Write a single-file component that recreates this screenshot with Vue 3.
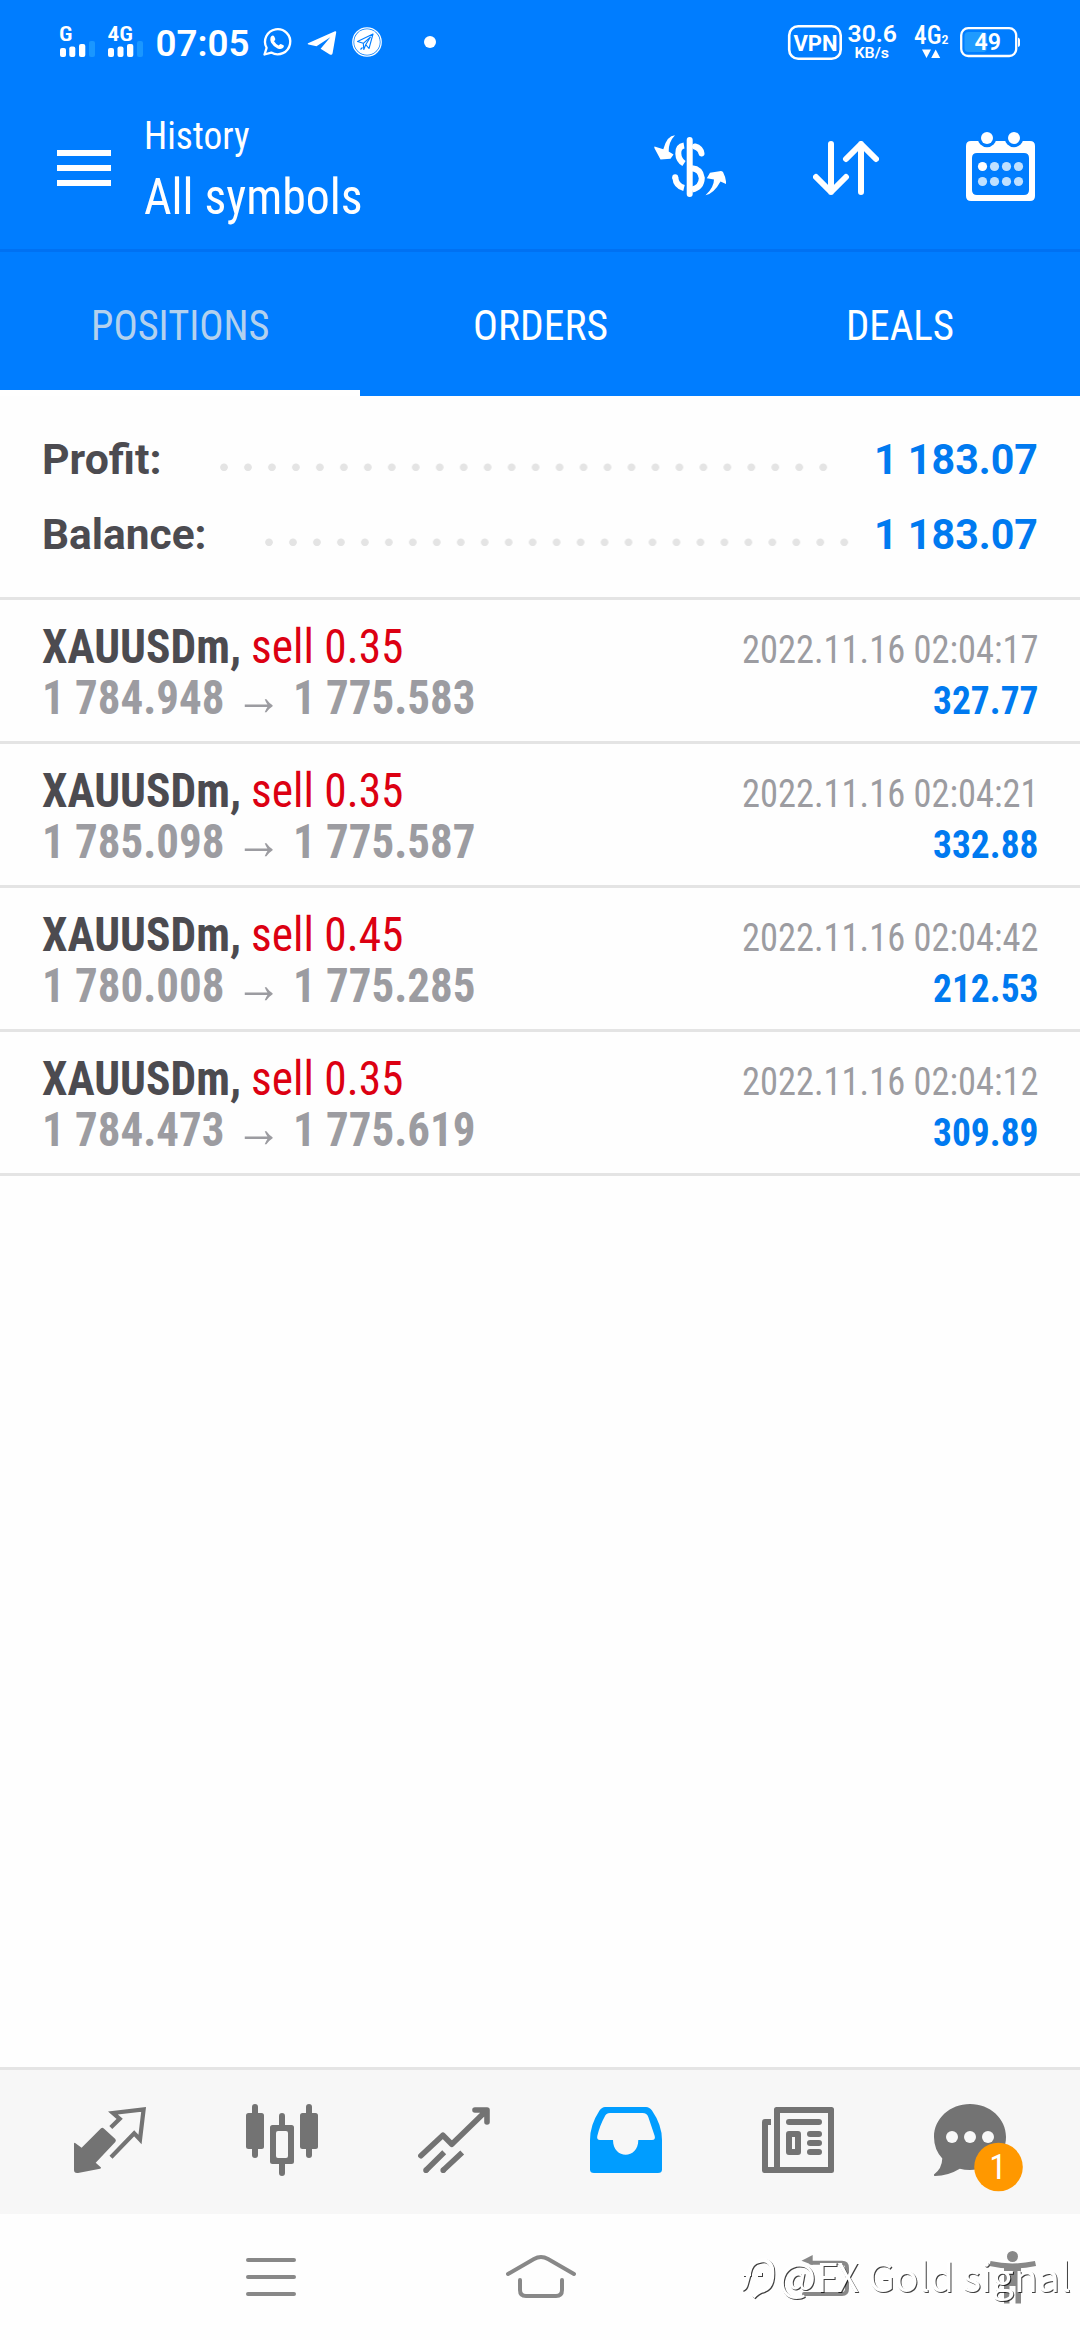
<script setup>
import { h } from 'vue'

// A run of text set to an exact advance width on a given baseline.
const Fit = (p) =>
  h('svg', { class: 'fit', width: p.w, height: p.h }, [
    h('text', { x: 0, y: p.base, textLength: p.w, lengthAdjust: 'spacingAndGlyphs', fill: 'currentColor' }, p.text),
  ])
Fit.props = ['w', 'h', 'base', 'text']

const tabs = [
  { label: 'POSITIONS', w: 178.5, active: true },
  { label: 'ORDERS', w: 135 },
  { label: 'DEALS', w: 108 },
]

const totals = [
  { label: 'Profit:', w: 119.5, dots: 26, value: '1 183.07' },
  { label: 'Balance:', w: 164.5, dots: 25, value: '1 183.07' },
]

const deals = [
  { volume: '0.35', open: '1 784.948', close: '1 775.583', time: '2022.11.16 02:04:17', profit: '327.77' },
  { volume: '0.35', open: '1 785.098', close: '1 775.587', time: '2022.11.16 02:04:21', profit: '332.88' },
  { volume: '0.45', open: '1 780.008', close: '1 775.285', time: '2022.11.16 02:04:42', profit: '212.53' },
  { volume: '0.35', open: '1 784.473', close: '1 775.619', time: '2022.11.16 02:04:12', profit: '309.89' },
]
</script>

<template>
  <div class="screen">
    <header class="top">
      <div class="status">
        <svg width="460" height="84" fill="#fff">
          <text x="59" y="41" font-size="20" font-weight="600" textLength="13.5" lengthAdjust="spacingAndGlyphs">G</text>
          <rect x="60" y="48" width="6" height="9" rx="2" />
          <rect x="69.3" y="46.5" width="6" height="10.5" rx="2" />
          <rect x="79" y="44" width="6.3" height="13" rx="2" />
          <rect x="89" y="41" width="6" height="16" rx="2" fill="#1a97ff" />
          <text x="107.5" y="41" font-size="20" font-weight="600" textLength="25.5" lengthAdjust="spacingAndGlyphs">4G</text>
          <rect x="108" y="48" width="6" height="9" rx="2" />
          <rect x="117.5" y="46.5" width="6" height="10.5" rx="2" />
          <rect x="127" y="44" width="6.3" height="13" rx="2" />
          <rect x="137" y="41" width="6" height="16" rx="2" fill="#1a97ff" />
          <text x="155.5" y="56" font-size="36" font-weight="600" class="wide" textLength="94" lengthAdjust="spacingAndGlyphs">07:05</text>
          <g transform="translate(263 28)">
            <path d="M1.5 26.5 L3.6 19.8 A12.6 12.6 0 1 1 8.3 24.6 Z" fill="none" stroke="#fff" stroke-width="2.3" stroke-linejoin="round" />
            <path d="M7.5 9.5 Q8.5 7.3 10 7.5 Q11 7.6 11.5 9 L12.3 11 Q12.5 12 11 13.3 Q12.8 16.3 15.6 17.4 Q17 15.7 17.8 15.9 L20.5 17.3 Q21.3 17.9 20.6 19.3 Q18.6 22 14.6 20.4 Q10.4 18.5 8 14.4 Q6.9 11.9 7.5 9.5Z" />
          </g>
          <path d="M308 43.2 L335 31.2 Q336.5 31 336.2 32.6 L332.6 53.2 Q332 55.6 329.8 54.4 L320.6 48.7 L330.3 37.2 L316.5 46.3 L308.5 44.6 Q307 44 308 43.2Z" />
          <circle cx="367" cy="42" r="12.8" />
          <circle cx="367" cy="42" r="14.2" fill="none" stroke="#fff" stroke-width="1.3" />
          <path d="M357.5 41.5 L373 34 L369 48.5 L365.7 44.7 L363.8 49.5 L363.3 43.3 Z M363.3 43.3 L370.5 37 L365.7 44.7 M360.5 49.5 L362.5 47.5" fill="none" stroke="#007dff" stroke-width="1.1" stroke-linejoin="round" />
          <circle cx="430" cy="42" r="6" />
        </svg>
        <svg width="300" height="84" viewBox="780 0 300 84" fill="#fff">
          <rect x="789.2" y="26.3" width="51.5" height="32.4" rx="9" fill="none" stroke="#fff" stroke-width="2.6" />
          <text x="793.5" y="51" font-size="22.5" font-weight="700" class="wide" textLength="44" lengthAdjust="spacingAndGlyphs">VPN</text>
          <text x="847.5" y="42" font-size="24" font-weight="600" class="wide" textLength="49.5" lengthAdjust="spacingAndGlyphs">30.6</text>
          <text x="854.5" y="58" font-size="15" font-weight="600" class="wide" textLength="34.5" lengthAdjust="spacingAndGlyphs">KB/s</text>
          <text x="914" y="43.5" font-size="25" font-weight="500" textLength="27.5" lengthAdjust="spacingAndGlyphs">4G</text>
          <text x="941.5" y="43.5" font-size="13" font-weight="600" textLength="7" lengthAdjust="spacingAndGlyphs">2</text>
          <path d="M922 49.5 H931 L926.5 58Z M931.2 58 H940.2 L935.7 49.5Z" />
          <rect x="964.5" y="32" width="22.5" height="20" rx="4" fill="#1f9bff" />
          <rect x="961.2" y="28.2" width="55" height="27.8" rx="7" fill="none" stroke="#fff" stroke-width="2.3" />
          <path d="M1018 37.5 Q1020 38 1020 40 V45 Q1020 46.5 1018 47Z" />
          <text x="974.5" y="50" font-size="23" font-weight="600" class="wide" textLength="26.5" lengthAdjust="spacingAndGlyphs">49</text>
        </svg>
      </div>

      <div class="bar">
        <svg class="burger" width="54" height="36" fill="#fff">
          <rect width="54" height="6" /><rect y="15" width="54" height="6" /><rect y="30" width="54" height="6" />
        </svg>
        <div class="titles">
          <Fit class="sub" :w="105.5" :h="50" :base="40" text="History" />
          <Fit class="title" :w="218.5" :h="65" :base="55" text="All symbols" />
        </div>
        <svg class="act" width="72" height="72" viewBox="0 0 72 72">
          <g fill="none" stroke="#fff" stroke-width="6" stroke-linecap="round">
            <path d="M35.7 9 V63" />
            <path d="M30 14.5 Q24 15.5 24.3 22.5 Q24.5 29 30 32.5" stroke-linecap="butt" />
            <path d="M41 15.5 Q46.5 17 47.5 22.5" />
            <path d="M38 37.3 Q46.5 38 47.8 47 Q47.5 56.5 38 58.6" stroke-linecap="butt" />
            <path d="M21.3 46.5 Q22 55 30 57" stroke-linecap="butt" />
          </g>
          <circle cx="21.2" cy="46.3" r="3" fill="#fff" />
          <path fill="#fff" d="M21 4.3 Q13 4.5 9.3 18.3 L.5 15.5 Q0 15.5 .5 17.2 L6.5 28.6 L16.5 27.7 L19.5 23.6 L14.7 20.5 Q14.5 11 21 4.3Z" />
          <path fill="#fff" d="M51.5 64.3 Q60 62.5 66.5 50.5 L72 53 Q72.5 48 69 41 Q67.5 39.6 65.5 40.3 L56 41.7 L52.8 47.3 L60 48.5 Q60 56.5 51.5 64.3Z" />
        </svg>
        <svg class="act sort" width="66" height="54" fill="none" stroke="#fff" stroke-width="6" stroke-linecap="round" stroke-linejoin="round">
          <path d="M18 3 V51 M3 36 L18 51 L33 36 M48 51 V3 M33 18 L48 3 L63 18" />
        </svg>
        <svg class="act" width="69" height="69" fill="#fff">
          <path fill-rule="evenodd" d="M5 9 H64 Q69 9 69 14 V64 Q69 69 64 69 H5 Q0 69 0 64 V14 Q0 9 5 9Z M11 21 Q6 21 6 26 V58 Q6 63 11 63 H58 Q63 63 63 58 V26 Q63 21 58 21Z" />
          <circle cx="21" cy="6" r="9.2" fill="#007dff" /><circle cx="48" cy="6" r="9.2" fill="#007dff" />
          <circle cx="21" cy="6" r="6" /><circle cx="48" cy="6" r="6" />
          <circle cx="16.5" cy="34.5" r="4.6" />
          <g fill="#bfe0ff">
            <circle v-for="n in 3" :key="n" :cx="16.5 + n * 12" cy="34.5" r="4.6" />
            <circle v-for="n in 4" :key="'b' + n" :cx="4.5 + n * 12" cy="49.5" r="4.6" />
          </g>
        </svg>
      </div>

      <nav class="tabs">
        <div v-for="t in tabs" :key="t.label" class="tab" :class="{ active: t.active }">
          <Fit :w="t.w" :h="138" :base="88" :text="t.label" />
        </div>
      </nav>
    </header>

    <section class="totals">
      <div v-for="t in totals" :key="t.label" class="total">
        <Fit class="label" :w="t.w" :h="75" :base="50" :text="t.label" />
        <div class="dots" :style="{ width: t.dots * 23.98 + 'px' }"></div>
        <Fit class="amount" :w="164" :h="75" :base="50" :text="t.value" />
      </div>
    </section>

    <main class="list">
      <article v-for="d in deals" :key="d.time" class="deal">
        <div class="left">
          <div class="line">
            <Fit class="symbol" :w="199" :h="78" :base="63" text="XAUUSDm," />
            <Fit class="side" :w="152.5" :h="78" :base="63" :text="'sell ' + d.volume" />
          </div>
          <div class="line prices">
            <Fit :w="182.5" :h="60" :base="36" :text="d.open" />
            <Fit class="arrow" :w="47" :h="60" :base="36.5" text="→" />
            <Fit :w="182.5" :h="60" :base="36" :text="d.close" />
          </div>
        </div>
        <div class="right">
          <Fit class="time" :w="296.5" :h="78" :base="63" :text="d.time" />
          <Fit class="profit" :w="105.5" :h="60" :base="36" :text="d.profit" />
        </div>
      </article>
    </main>

    <nav class="bottom">
      <a><svg width="72" height="72" fill="#737373">
        <path d="M0 39.5 Q.3 38 1.5 39.3 L7.6 43.7 L26.8 24.5 Q28.3 23 29.8 24.5 L41.3 35 Q42.5 36.7 41.3 38 L21.7 58.7 L27 63.5 Q27.3 64.5 26 64.8 L4 69 Q0 69.5 0 66Z" />
        <path d="M36.8 23.5 L45.7 14.8 L39 9 L69.6 5.5 L66 35.5 L60.2 29.3 L37 53.3" fill="none" stroke="#737373" stroke-width="4.2" />
      </svg></a>
      <a><svg width="72" height="72" fill="#737373">
        <rect y="9" width="18" height="36" rx="2.5" /><rect x="6" width="6" height="54" rx="3" />
        <rect x="54" y="9" width="18" height="36" rx="2.5" /><rect x="60" width="6" height="54" rx="3" />
        <path d="M33 22 V12 a3 3 0 0 1 6 0 V22Z M33 59 V69 a3 3 0 0 0 6 0 V59Z" />
        <path fill-rule="evenodd" d="M26.5 21 H45.5 Q48 21 48 23.5 V57.5 Q48 60 45.5 60 H26.5 Q24 60 24 57.5 V23.5 Q24 21 26.5 21Z M32 27 Q30 27 30 29 V52 Q30 54 32 54 H40 Q42 54 42 52 V29 Q42 27 40 27Z" />
      </svg></a>
      <a><svg width="72" height="72" fill="none" stroke="#737373" stroke-width="5.6">
        <path d="M2.9 51.7 L24.9 31.2 L33.8 40.2 L68 7 M57 6 H69 V18" stroke-linecap="round" stroke-linejoin="round" />
        <path d="M8 66.3 L26.2 48.3 M25.2 66.3 L44.2 48.5" />
        <path d="M8 66.3 h.01 M25.2 66.3 h.01" stroke-linecap="round" />
      </svg></a>
      <a><svg width="72" height="72" fill="#009dff">
        <path fill-rule="evenodd" d="M15 3 H56 Q59.5 3 62 6.5 Q72 21 72 36 V65.5 Q72 69 68 69 H4 Q0 69 0 65.5 V36 Q0 21 9.5 6.5 Q12 3 15 3Z M20 9 Q16 9 14.5 13 Q10 21 7.3 32 Q6.5 36 10 36 H23 C23 55.6 48.3 55.6 48.3 36 H62 Q65.7 36 64.7 32 L58.3 13 Q57 9 52.5 9Z" />
      </svg></a>
      <a><svg width="72" height="72" fill="#737373">
        <path fill-rule="evenodd" d="M14.5 3 H69.5 Q72 3 72 5.5 V66.5 Q72 69 69.5 69 H2.5 Q0 69 0 66.5 V18 Q0 15 3 15 H9 V21 H6 V63 H12 V5.5 Q12 3 14.5 3Z M18 9 V63 H66 V9Z" />
        <rect x="24" y="15" width="36" height="6" rx="3" />
        <path fill-rule="evenodd" d="M27 27 H36 Q39 27 39 30 V48 Q39 51 36 51 H27 Q24 51 24 48 V30 Q24 27 27 27Z M30 33 V45 H33 V33Z" />
        <rect x="45" y="27" width="15" height="6" rx="3" /><rect x="45" y="36" width="15" height="6" rx="3" /><rect x="45" y="45" width="15" height="6" rx="3" />
      </svg></a>
      <a><svg class="chat" width="72" height="72" fill="#737373">
        <path d="M36 0 C56 0 72 14.5 72 33 C72 51.5 56 66 36 66 Q30.5 66 25.8 64.8 Q14 72 1 72 Q-.5 72 0 70.5 Q8 64.5 8.3 54.5 Q0 45.5 0 33 C0 14.5 16 0 36 0Z" />
        <g fill="#f9f9f9"><circle cx="18" cy="33" r="6" /><circle cx="36" cy="33" r="6" /><circle cx="54" cy="33" r="6" /></g>
        <circle cx="64.5" cy="63" r="24.3" fill="#ff9800" />
        <text x="64" y="75" text-anchor="middle" font-size="35" fill="#fff">1</text>
      </svg></a>
    </nav>

    <footer class="system">
      <svg width="1080" height="126" viewBox="0 2214 1080 126" fill="none" stroke="#888" stroke-width="4" stroke-linecap="round">
        <path d="M248 2260 H294 M248 2277 H294 M248 2294 H294" />
        <path d="M508 2274 L534 2259 Q541 2255 548 2259 L574 2274 M520 2280 V2290 Q520 2296 526 2296 H556 Q562 2296 562 2290 V2280" />
        <path d="M811 2262.7 H842 Q847 2262.7 847 2268 V2288.5 Q847 2294 842 2294 H804" />
        <path d="M801.5 2260.7 L812.7 2255 V2265Z" fill="#888" stroke="none" />
        <circle cx="1012.5" cy="2256.5" r="5.5" fill="#888" stroke="none" />
        <path d="M990 2263.5 Q1012 2268.5 1035.5 2263.5" stroke-width="5" stroke-linecap="butt" />
        <path d="M1004 2266 H1021 V2303.5 H1015.5 V2286 H1009.5 V2303.5 H1004Z" fill="#888" stroke="none" />
      </svg>
      <div class="mark">
        <svg width="38" height="48" fill="none" stroke="#fff" stroke-width="4">
          <path d="M3 35 Q6 34 7 30 L10 19 Q12 8 20 7 Q30 4 33 14 Q35 32 25 36 Q18 38 14 43 M4 20 H12 M18 20 H23" />
        </svg>
        <Fit class="owner" :w="292" :h="48" :base="38" text="@FX Gold signal" />
      </div>
    </footer>
  </div>
</template>

<style>
body { margin: 0; background: #fff; }
.fit { display: block; overflow: visible; flex: none; }
</style>

<style scoped>
.screen {
  width: 1080px;
  height: 2340px;
  display: flex;
  flex-direction: column;
  overflow: hidden;
  position: relative;
  background: #fefefe;
  color: #fff;
  font-family: "Roboto Condensed", Roboto, sans-serif;
}
svg { display: block; flex: none; }
.top { background: #007dff; }
.wide { font-family: Roboto, sans-serif; }
.status { display: flex; justify-content: space-between; height: 84px; }

.bar {
  display: flex;
  align-items: center;
  height: 165px;
  padding: 0 45px 0 57px;
  border-bottom: 3px solid #0071f2;
}
.burger { margin-top: 3px; }
.titles { flex: 1; margin-left: 33px; }
.sub { font-size: 39px; font-weight: 430; }
.title { font-size: 50px; font-weight: 430; }
.act { margin-left: 84px; }
.act.sort { margin-left: 87px; margin-top: 3px; }
.act.sort + .act { margin-left: 87px; }

.tabs { display: flex; height: 144px; }
.tab {
  flex: 1;
  display: flex;
  justify-content: center;
  border-bottom: 6px solid transparent;
  font-size: 42px;
}
.tab.active { color: #b3d1ee; border-bottom-color: #fff; }

.totals { padding: 28px 42px 23px; border-bottom: 3px solid #e4e4e4; font-family: Roboto, sans-serif; font-size: 42px; }
.total { display: flex; height: 75px; }
.label { color: #4c4b50; font-weight: 700; }
.dots {
  margin-left: 50px;
  background: radial-gradient(circle at 12px 43.3px, #e4e4e4 3.4px, transparent 4.2px) 0 0 / 23.98px 75px repeat-x;
}
.amount { margin-left: auto; color: #007af0; font-weight: 700; }

.list { flex: 1; }
.deal {
  display: flex;
  justify-content: space-between;
  height: 141px;
  padding: 0 42px;
  border-bottom: 3px solid #e4e4e4;
}
.line { display: flex; gap: 9.5px; font-size: 48px; }
.symbol { color: #4c4b50; font-weight: 700; }
.side { color: #dc0012; font-weight: 450; }
.prices { gap: 10.5px; color: #9c9ca1; font-weight: 700; }
.arrow { font-weight: 500; font-size: 56px; }
.right { display: flex; flex-direction: column; align-items: flex-end; font-size: 39.5px; }
.time { color: #9c9ca1; font-weight: 430; }
.profit { color: #007af0; font-weight: 700; }

.bottom {
  display: flex;
  height: 144px;
  padding: 0 24px;
  border-top: 3px solid #e4e4e4;
  background: #f7f7f7;
}
.bottom a { flex: 1; display: flex; justify-content: center; padding-top: 34px; }
.chat { overflow: visible; }

.system { height: 126px; }
.mark {
  position: absolute;
  left: 739px;
  bottom: 38px;
  display: flex;
  gap: 2px;
  filter: drop-shadow(1px 1px 0 rgba(0, 0, 0, 0.75));
}
.owner { font-family: "Noto Sans CJK SC", sans-serif; font-size: 39px; font-weight: 400; }
</style>
